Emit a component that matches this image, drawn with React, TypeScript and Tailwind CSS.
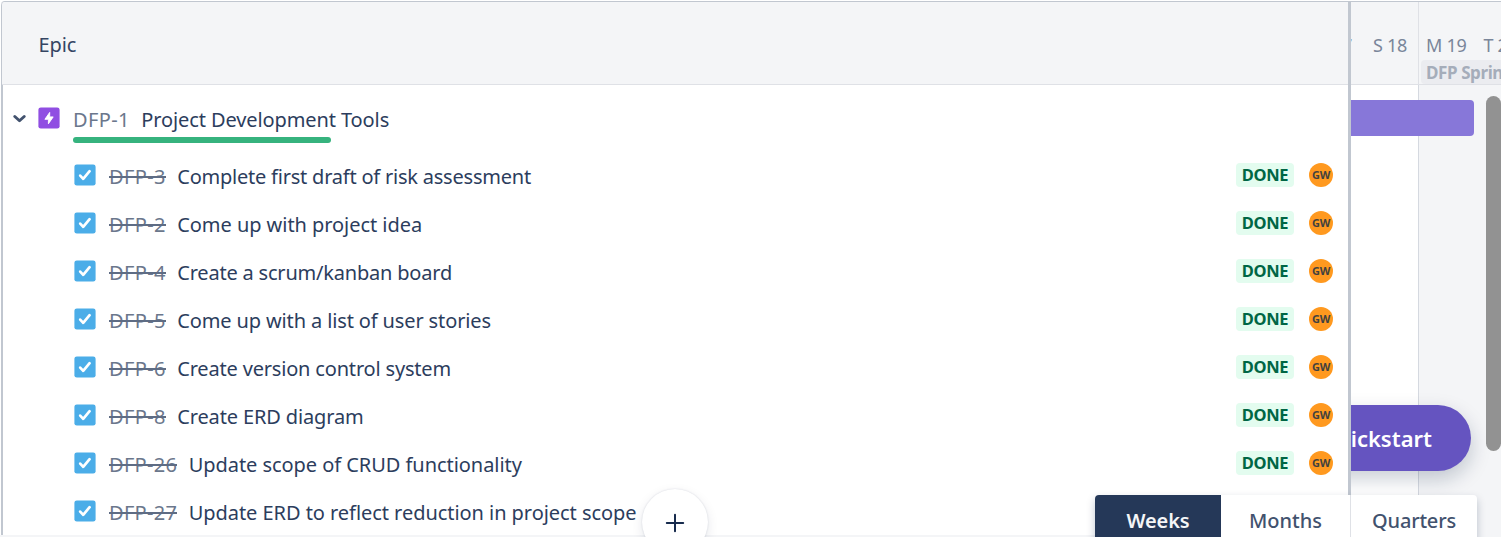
type Task = { id: string; title: string; idTracking: string; tracking: string; status?: string; assignee?: string };

const tasks: Task[] = [
  { id: "DFP-3", title: "Complete first draft of risk assessment", idTracking: "tracking-[0.35px]", tracking: "tracking-[-0.22px]", status: "DONE", assignee: "GW" },
  { id: "DFP-2", title: "Come up with project idea", idTracking: "tracking-[0.35px]", tracking: "tracking-[-0.05px]", status: "DONE", assignee: "GW" },
  { id: "DFP-4", title: "Create a scrum/kanban board", idTracking: "tracking-[0.35px]", tracking: "tracking-[-0.2px]", status: "DONE", assignee: "GW" },
  { id: "DFP-5", title: "Come up with a list of user stories", idTracking: "tracking-[0.35px]", tracking: "tracking-[-0.13px]", status: "DONE", assignee: "GW" },
  { id: "DFP-6", title: "Create version control system", idTracking: "tracking-[0.35px]", tracking: "tracking-[-0.18px]", status: "DONE", assignee: "GW" },
  { id: "DFP-8", title: "Create ERD diagram", idTracking: "tracking-[0.35px]", tracking: "tracking-[-0.14px]", status: "DONE", assignee: "GW" },
  { id: "DFP-26", title: "Update scope of CRUD functionality", idTracking: "tracking-[0.3px]", tracking: "tracking-[-0.05px]", status: "DONE", assignee: "GW" },
  { id: "DFP-27", title: "Update ERD to reflect reduction in project scope", idTracking: "tracking-[0.3px]", tracking: "tracking-[-0.05px]" },
];

function TaskIcon() {
  return (
    <svg className="mb-px size-[22px] shrink-0" viewBox="0 0 22 22" fill="none">
      <rect x="0.4" y="0.4" width="21.2" height="21.2" rx="2.4" fill="#4bade8" />
      <path d="M6.2 11.6 9.2 14.8 15.6 7.2" stroke="#fff" strokeWidth="2.7" strokeLinecap="round" strokeLinejoin="round" />
    </svg>
  );
}

function EpicIcon() {
  return (
    <svg className="size-[22px] shrink-0" viewBox="0 0 22 22" fill="none">
      <rect x="0.4" y="0.4" width="21.2" height="21.2" rx="2.4" fill="#904ee2" />
      <path d="M11.7 5.4 6.9 12.3H10.4V16.8L15.2 9.9H11.7Z" fill="#fff" stroke="#fff" strokeWidth="0.9" strokeLinejoin="round" />
    </svg>
  );
}

function TaskRow({ task }: { task: Task }) {
  return (
    <div className="flex h-12 shrink-0 items-center pl-[71px] pr-[15px]">
      <TaskIcon />
      <span className="ml-[13px] flex w-full items-center whitespace-pre pt-[3px] leading-6">
        <span className={"relative text-[#6b778c] " + task.idTracking}>
          {task.id}
          <span className="absolute inset-x-0 top-[11px] h-[2px] bg-[#5e6c84]" />
        </span>
        <span className={"ml-[11.5px] text-[#2c3d5d] " + task.tracking}>{task.title}</span>
      </span>
      {task.status && (
        <span className="mb-px flex h-6 w-[58px] shrink-0 items-center justify-center rounded-[4px] bg-[#e3fcef] pt-[2px] text-[16.5px] font-bold tracking-[-0.3px] text-[#006644]">
          {task.status}
        </span>
      )}
      {task.assignee && (
        <span className="mb-px ml-[15px] flex size-6 shrink-0 items-center justify-center rounded-full bg-[#ff991f] pt-px text-[11px] font-bold tracking-[-0.3px] text-[#42413f]">
          {task.assignee}
        </span>
      )}
    </div>
  );
}

function EpicPanel() {
  return (
    <section className="flex w-[1347px] shrink-0 flex-col overflow-hidden rounded-tl-[4px] border-l border-[#c1c7d0]">
      <header className="flex h-[83px] shrink-0 items-center border-b border-[#dfe1e6] bg-[#f4f5f7] pl-[36.5px] pt-[4px] text-[#344563]">
        <span className="tracking-[-0.1px]">Epic</span>
      </header>
      <div className="flex flex-1 flex-col border-l border-[#c1c7d0] pb-px">
        <div className="flex h-[66px] shrink-0 items-center pl-[9.5px]">
          <svg className="mr-[12.5px] size-[13px]" viewBox="0 0 13 13" fill="none">
            <path d="M1.8 4.5 6.5 8.8 11.2 4.5" stroke="#42526e" strokeWidth="2.9" strokeLinecap="round" strokeLinejoin="round" />
          </svg>
          <EpicIcon />
          <div className="relative ml-[13px] flex whitespace-pre pt-[3px] leading-6">
            <span className="tracking-[0.35px] text-[#6b778c]">DFP-1</span>
            <span className="ml-[11.5px] tracking-[-0.1px] text-[#2c3d5d]">Project Development Tools</span>
            <span className="absolute left-0 top-[32px] h-[6px] w-[258px] rounded-[3px] bg-[#36b37e]" />
          </div>
        </div>
        {tasks.map((task) => (
          <TaskRow key={task.id} task={task} />
        ))}
      </div>
    </section>
  );
}

function Timeline() {
  return (
    <section className="relative flex min-w-0 flex-1 flex-col overflow-hidden">
      <header className="flex h-[83px] shrink-0 border-b border-[#dfe1e6] bg-[#f4f5f7] text-[18px] text-[#7a869a]">
        <div className="relative w-[67px] shrink-0 whitespace-pre pt-[31px] leading-6">
          <span className="absolute -left-[9px]">7</span>
          <span className="pl-[22px] tracking-[-0.3px]">S 18</span>
        </div>
        <div className="flex w-[83px] flex-col overflow-hidden border-l border-[#dfe1e6]">
          <div className="mt-[31px] flex gap-[17px] whitespace-pre pl-[7px] leading-6 tracking-[-0.3px]">
            <span>M 19</span>
            <span>T 20</span>
          </div>
          <div className="ml-[2px] mt-[3px] h-6 w-40 rounded-[4px] bg-[#ebecf0] pl-[5px] text-[17px] font-bold leading-[25px] tracking-[-0.4px] whitespace-pre text-[#a5adba]">
            DFP Sprint 1
          </div>
        </div>
      </header>
      <div className="flex flex-1">
        <div className="w-[67px] shrink-0 bg-white pt-[15px]">
          <div className="relative h-9 w-[123px] rounded-r-[4px] bg-[#8777d9]" />
        </div>
        <div className="flex-1 border-l border-[#d5d9e0] bg-[#f4f5f7]" />
      </div>
      <button className="absolute right-[30px] top-[403px] h-[66px] w-[188px] rounded-full bg-[#6554c0] pr-[39px] pt-[1px] text-right text-[22px] font-semibold text-white shadow-[0_8px_20px_rgba(9,30,66,0.22)]">
        Quickstart
      </button>
      <div className="absolute right-0 top-[94px] h-[355px] w-[15px] rounded-full bg-[#929292]" />
    </section>
  );
}

export default function App() {
  return (
    <main className="relative flex h-[537px] w-[1501px] overflow-hidden bg-white pl-px pt-px font-['Noto_Sans',sans-serif] text-[20px]">
      <div className="flex w-full border-t border-[#c1c7d0] rounded-tl-[4px]">
        <EpicPanel />
        <div className="w-[3px] shrink-0 bg-[#c1c7d0]" />
        <Timeline />
      </div>
      <div className="absolute inset-x-0 bottom-0 h-[2px] bg-[#f4f5f7]" />
      <button className="absolute left-[642px] top-[489px] flex size-[66px] items-center justify-center rounded-full bg-white shadow-[0_0_2px_rgba(9,30,66,0.15),0_4px_12px_rgba(9,30,66,0.1)]">
        <svg className="mt-px size-[20px]" viewBox="0 0 20 20">
          <path d="M10 1.8V18.2M1.8 10H18.2" stroke="#172b4d" strokeWidth="2" strokeLinecap="round" />
        </svg>
      </button>
      <nav className="absolute left-[1095px] top-[495px] flex h-[51px] w-[382px] rounded-[4px] bg-white text-[#42526e] shadow-[0_4px_8px_rgba(9,30,66,0.25)]">
        <button className="w-[126px] rounded-tl-[4px] bg-[#253858] font-semibold tracking-[-0.1px] text-[#f4f5f7]">Weeks</button>
        <button className="w-[130px] border-r border-[#dfe1e6] font-medium">Months</button>
        <button className="flex-1 font-medium tracking-[-0.2px]">Quarters</button>
      </nav>
    </main>
  );
}
